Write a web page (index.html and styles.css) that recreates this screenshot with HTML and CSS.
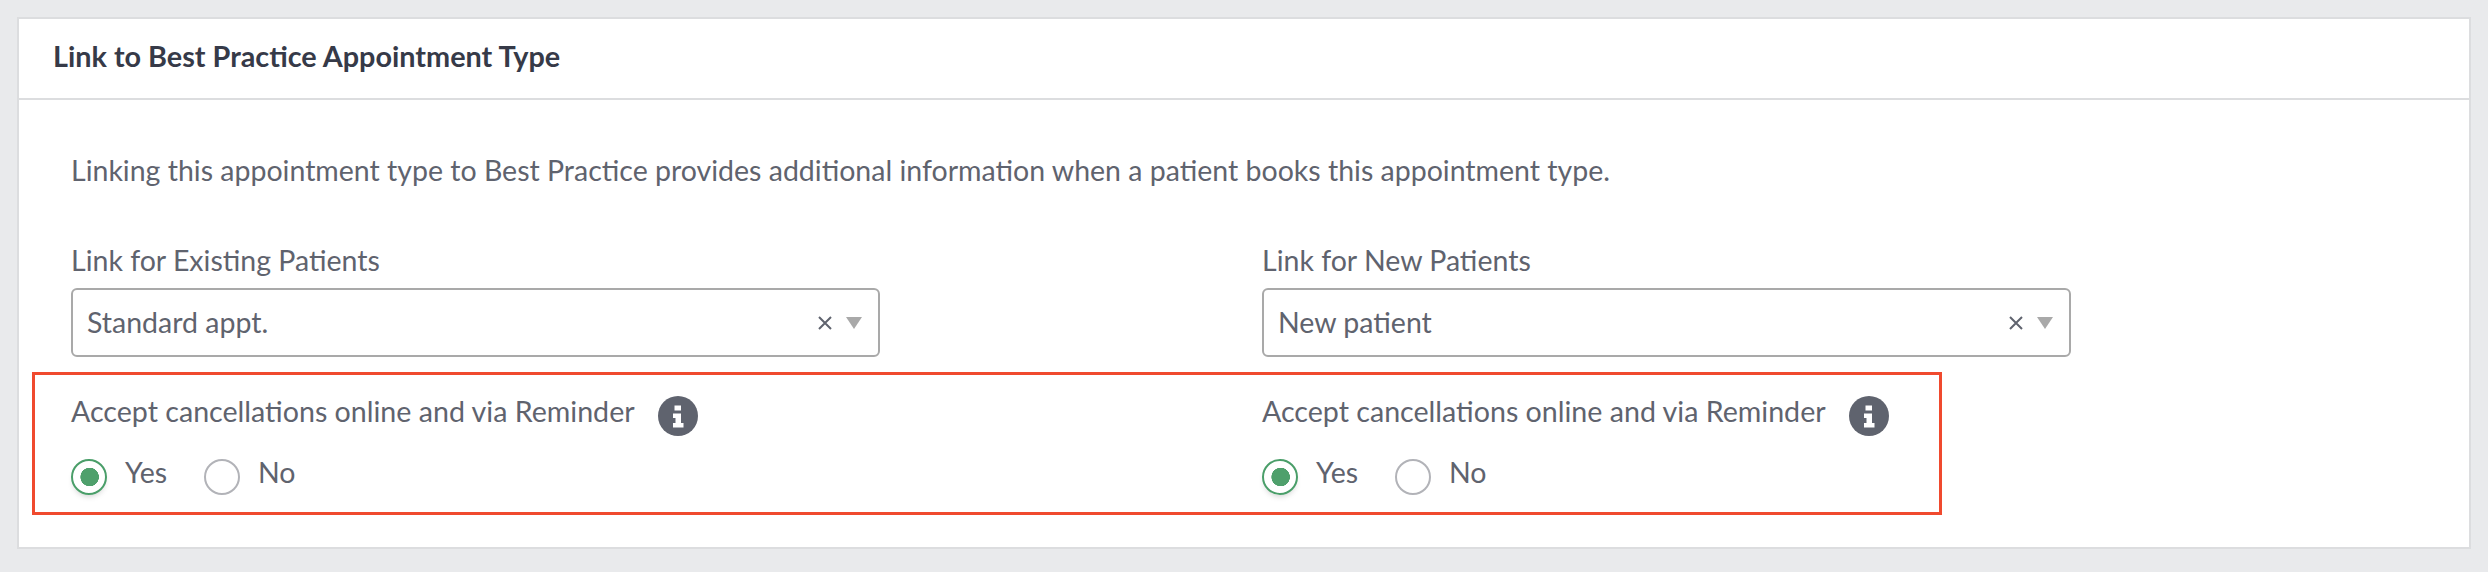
FILE: index.html
```html
<!DOCTYPE html>
<html lang="en">
<head>
<meta charset="utf-8">
<title>Link to Best Practice Appointment Type</title>
<link rel="stylesheet" href="styles.css">
</head>
<body>
<section class="card">
  <h2 class="card-title">Link to Best Practice Appointment Type</h2>
  <div class="card-body">
    <p class="intro">Linking this appointment type to Best Practice provides additional information when a patient books this appointment type.</p>
    <div class="columns">
      <div class="column">
        <div class="field-label">Link for Existing Patients</div>
        <div class="select">
          <span class="select-value">Standard appt.</span>
          <svg class="clear" viewBox="0 0 14 14"><path d="M1 1l12 12M13 1L1 13"/></svg>
          <svg class="caret" viewBox="0 0 16 12"><path d="M0 0h16L8 12z"/></svg>
        </div>
        <div class="option-label">
          <span>Accept cancellations online and via Reminder</span>
          <svg class="info" viewBox="0 0 40 40"><circle cx="20" cy="20" r="20"/><path class="info-glyph" d="M16.5 9.5h6.500v5h-6.500zM15 17.500h8v9.500h2.500v4.500h-10.500v-4.500h2.500v-5h-2.500z"/></svg>
        </div>
        <div class="radios">
          <span class="radio radio-on"></span><span class="radio-text">Yes</span>
          <span class="radio"></span><span class="radio-text">No</span>
        </div>
      </div>
      <div class="column">
        <div class="field-label">Link for New Patients</div>
        <div class="select">
          <span class="select-value">New patient</span>
          <svg class="clear" viewBox="0 0 14 14"><path d="M1 1l12 12M13 1L1 13"/></svg>
          <svg class="caret" viewBox="0 0 16 12"><path d="M0 0h16L8 12z"/></svg>
        </div>
        <div class="option-label">
          <span>Accept cancellations online and via Reminder</span>
          <svg class="info" viewBox="0 0 40 40"><circle cx="20" cy="20" r="20"/><path class="info-glyph" d="M16.5 9.5h6.500v5h-6.500zM15 17.500h8v9.500h2.500v4.500h-10.500v-4.500h2.500v-5h-2.500z"/></svg>
        </div>
        <div class="radios">
          <span class="radio radio-on"></span><span class="radio-text">Yes</span>
          <span class="radio"></span><span class="radio-text">No</span>
        </div>
      </div>
    </div>
  </div>
  <div class="highlight"></div>
</section>
</body>
</html>
```

FILE: styles.css
```css
* { box-sizing: border-box; }
html, body { margin: 0; height: 100%; }
body {
  background: #e9eaec;
  padding: 17px 17px 0;
  font-family: Lato, "Open Sans", sans-serif;
  color: #5f636e;
  overflow: hidden;
}
.card {
  position: relative;
  height: 532px;
  background: #fff;
  border: 2px solid #dcdddf;
}
.card-title {
  margin: 0;
  height: 81px;
  padding: 0 0 0 34px;
  border-bottom: 2px solid #dcdddf;
  font-size: 28.800px;
  font-weight: 700;
  line-height: 75px;
  color: #363a48;
}
.card-body { padding: 0 0 0 52px; }
.intro {
  margin: 0;
  padding-top: 52px;
  font-size: 28.500px;
  line-height: 36px;
}
.columns {
  display: grid;
  grid-template-columns: 1191px 809px;
  margin-top: 54px;
}
.field-label {
  font-size: 28.500px;
  line-height: 36px;
}
.select {
  display: flex;
  align-items: center;
  width: 809px;
  height: 69px;
  margin-top: 10px;
  padding: 0 16px 0 14px;
  border: 2px solid #a9a9a9;
  border-radius: 6px;
}
.select-value {
  flex: 1;
  font-size: 28.500px;
  margin-top: -1px;
}
.clear {
  width: 14px;
  height: 14px;
  margin-right: 14px;
  fill: none;
  stroke: #5f636e;
  stroke-width: 2;
}
.caret {
  width: 16px;
  height: 12px;
  fill: #a9a9a9;
}
.option-label {
  display: flex;
  align-items: center;
  gap: 23px;
  height: 42px;
  margin-top: 38px;
  font-size: 28.600px;
}
.option-label span { margin-top: -11px; }
.info {
  width: 40px;
  height: 40px;
  fill: #5f636e;
}
.info-glyph { fill: #fff; }
.radios {
  display: flex;
  align-items: center;
  height: 36px;
  margin-top: 22px;
  font-size: 28.500px;
}
.radio {
  width: 36px;
  height: 36px;
  border: 2px solid #b2b3b8;
  border-radius: 50%;
}
.radio-on {
  border-color: #4a9e69;
  background: radial-gradient(circle at 52% 50%, #4fa06c 0 9px, transparent 9.500px);
  box-shadow: 0 4px 6px -3px rgba(0,0,0,.22);
}
.radio-text {
  margin: -11px 0 0 18px;
  width: 61px;
}
.radio-text:last-child { width: auto; }
.radio + .radio-text + .radio { margin-left: 18px; }
.highlight {
  position: absolute;
  left: 13px;
  top: 353px;
  width: 1910px;
  height: 143px;
  border: 3px solid #f04a2e;
  pointer-events: none;
}
```
